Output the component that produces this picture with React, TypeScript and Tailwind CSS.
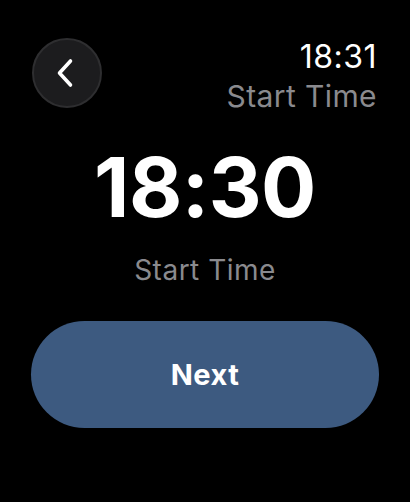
const App = () => {
  return (
    <main
      className="flex h-[502px] w-[410px] flex-col overflow-hidden bg-black text-white"
      style={{ fontFamily: 'Inter, "Noto Sans", sans-serif' }}
    >
      <div className="flex items-start justify-between pl-[32px] pr-[33px] pt-[38px]">
        <button className="flex h-[70px] w-[70px] items-center justify-center rounded-full border-2 border-[#2e2e30] bg-[#1c1c1e]">
          <svg width="20" height="30" viewBox="0 0 20 30" fill="none" className="mr-[4px]">
            <path
              d="M15.5 3 L4.5 15 L15.5 27"
              stroke="white"
              strokeWidth="3.6"
              strokeLinecap="round"
              strokeLinejoin="round"
            />
          </svg>
        </button>
        <div className="flex flex-col items-end">
          <span className="text-[32px] leading-[38px] tracking-[0.5px]">18:31</span>
          <span className="mt-[3px] text-[30px] leading-[34px] tracking-[0.4px] text-[#8a8a8e]">Start Time</span>
        </div>
      </div>
      <div className="mt-[25px] flex flex-col items-center">
        <span className="text-[82px] font-bold leading-[100px] tracking-[-0.5px]">18:30</span>
        <span className="mt-[15px] text-[28px] leading-[34px] tracking-[0.5px] text-[#8a8a8e]">Start Time</span>
      </div>
      <div className="mt-[34px] px-[31px]">
        <button className="flex h-[107px] w-full items-center justify-center rounded-[54px] bg-[#3d5a80] text-[29px] font-bold tracking-[0.5px]">
          Next
        </button>
      </div>
    </main>
  )
}

export default App
